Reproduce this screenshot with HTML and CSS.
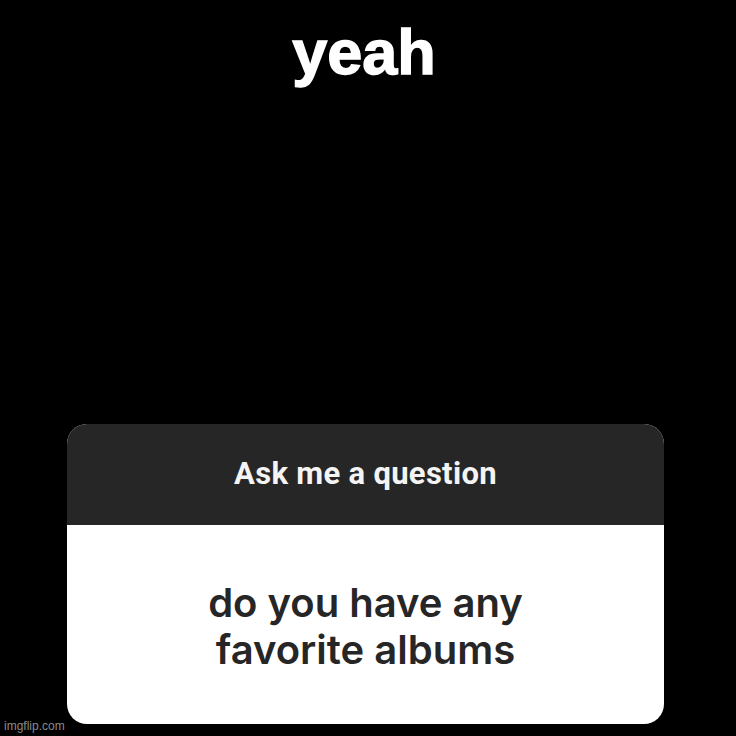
FILE: index.html
```html
<!DOCTYPE html>
<html lang="en">
<head>
  <meta charset="UTF-8" />
  <title>yeah</title>
  <link rel="stylesheet" href="styles.css">
</head>
<body>

<div class="story">
  <div class="caption">yeah</div>

  <div class="question-card">
    <div class="card-head">Ask me a question</div>
    <div class="card-body">do you have any<br>favorite albums</div>
  </div>

  <div class="watermark">imgflip.com</div>
</div>

</body>
</html>
```

FILE: styles.css
```css
body {
  margin: 0;
  background: #000;
}

.story {
  width: 736px;
  height: 736px;
  background: #000;
  display: flex;
  flex-direction: column;
  align-items: center;
  position: relative;
}

.caption {
  margin-top: 14px;
  margin-left: -8px;
  font-family: "Liberation Sans", Arial, sans-serif;
  font-weight: bold;
  font-size: 63px;
  line-height: 76px;
  color: #fff;
  -webkit-text-stroke: 1.4px #fff;
}

.question-card {
  margin-top: 334px;
  width: 597px;
  margin-left: -5px;
  border-radius: 20px;
  overflow: hidden;
  background: #fff;
}

.card-head {
  background: #262626;
  height: 101px;
  display: flex;
  align-items: center;
  justify-content: center;
  font-family: Roboto, sans-serif;
  font-weight: bold;
  font-size: 31px;
  letter-spacing: 0.3px;
  color: #f4f4f4;
  padding-bottom: 2px;
  box-sizing: border-box;
}

.card-body {
  height: 199px;
  padding-top: 54px;
  box-sizing: border-box;
  text-align: center;
  font-family: Inter, sans-serif;
  font-weight: 600;
  font-size: 40px;
  line-height: 47px;
  color: #262626;
}

.watermark {
  position: absolute;
  left: 4px;
  bottom: 3px;
  font-family: "Liberation Sans", Arial, sans-serif;
  font-size: 12px;
  color: #8a8a8a;
}
```
